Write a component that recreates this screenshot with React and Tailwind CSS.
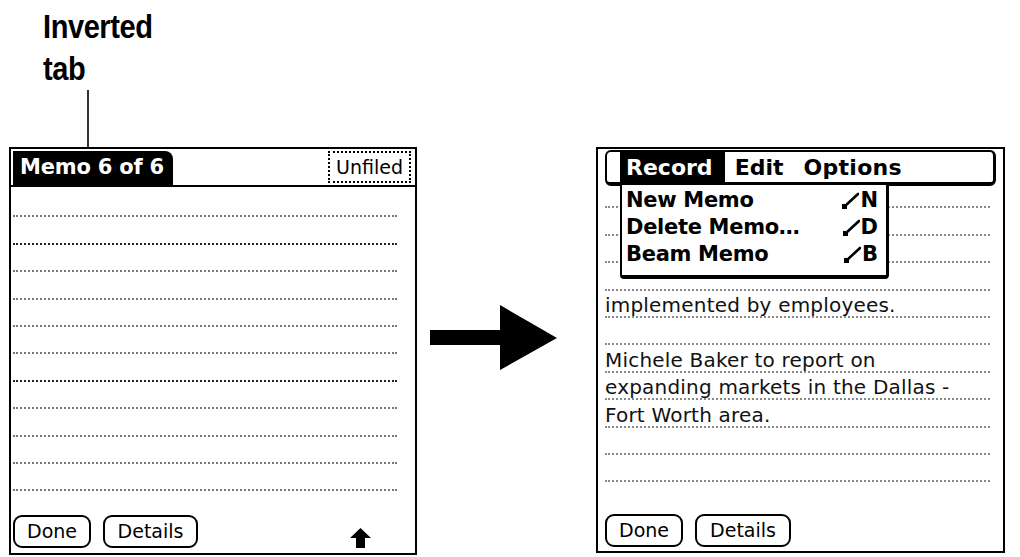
const PALM = { fontFamily: '"DejaVu Sans", "Noto Sans", sans-serif' };

const LEFT_LINES = [0, 1, 0, 0, 0, 0, 1, 0, 0, 0, 0];

const RIGHT_ROWS = [
  '', '', '', '',
  'implemented by employees.',
  '',
  'Michele Baker to report on',
  'expanding markets in the Dallas -',
  'Fort Worth area.',
  '', '',
];

const MENU_ITEMS = [
  { label: 'New Memo', key: 'N' },
  { label: 'Delete Memo…', key: 'D' },
  { label: 'Beam Memo', key: 'B' },
];

function Stroke() {
  return (
    <svg width="18" height="19" viewBox="0 0 18 19" className="mr-[1px]">
      <path d="M4 15 L17 3" stroke="black" strokeWidth="2.6" strokeLinecap="round" />
      <rect x="1" y="13" width="5" height="5" fill="black" />
    </svg>
  );
}

function PalmButton({ children, className = '' }) {
  return (
    <div
      className={`h-[33px] border-2 border-black rounded-[9px] flex items-center justify-center text-[19px] text-black ${className}`}
      style={PALM}
    >
      {children}
    </div>
  );
}

function LeftPanel() {
  return (
    <div className="w-[408px] h-[408px] border-2 border-black flex flex-col bg-white">
      {/* header with inverted tab */}
      <div className="flex items-end justify-between pt-[2px] pl-[2px] pr-[4px] border-b-2 border-black h-[38px]">
        <div
          className="bg-black text-white font-bold text-[21px] h-full pl-[7px] pr-[9px] flex items-center rounded-tr-[8px] tracking-[-0.2px]"
          style={PALM}
        >
          Memo 6 of 6
        </div>
        <div
          className="self-start h-[32px] border-2 border-dotted border-black px-[6px] flex items-center text-[19px]"
          style={PALM}
        >
          Unfiled
        </div>
      </div>

      {/* empty memo lines */}
      <div className="pl-[2px] pr-[18px] mt-[3px]">
        {LEFT_LINES.map((b, i) => (
          <div
            key={i}
            className={`h-[27.4px] border-b-2 border-dotted ${b ? 'border-[#222]' : 'border-[#777]'}`}
          />
        ))}
      </div>

      {/* footer */}
      <div className="mt-auto flex items-center gap-[12px] pl-[2px] pr-[44px] pb-[5px]">
        <PalmButton className="w-[78px]">Done</PalmButton>
        <PalmButton className="w-[95px]">Details</PalmButton>
        <svg width="21" height="20" viewBox="0 0 21 20" className="ml-auto mt-[12px]">
          <path d="M10.5 0 L21 10 L15 10 L15 20 L6 20 L6 10 L0 10 Z" fill="black" />
        </svg>
      </div>
    </div>
  );
}

function RightPanel() {
  return (
    <div className="relative w-[409px] h-[406px] border-2 border-black flex flex-col bg-white">
      {/* menu bar */}
      <div className="mx-[7px] mt-[1px] h-[36px] border-2 border-black border-b-[4px] border-r-[3px] rounded-[6px] flex items-center pl-[13px]">
        <div
          className="bg-black text-white font-bold text-[22px] h-full flex items-center pl-[6px] pr-[12px]"
          style={PALM}
        >
          Record
        </div>
        <span className="font-bold text-[22px] ml-[10px]" style={PALM}>Edit</span>
        <span className="font-bold text-[22px] ml-[20px] tracking-[0.3px]" style={PALM}>Options</span>
      </div>

      {/* memo text on lines */}
      <div className="pl-[7px] pr-[13px] mt-[-5px]">
        {RIGHT_ROWS.map((t, i) => (
          <div
            key={i}
            className="h-[27.4px] border-b-2 border-dotted border-[#888] flex items-end text-[20px] leading-none pb-[1px] text-[#111] tracking-[0.2px] whitespace-nowrap"
            style={PALM}
          >
            {t}
          </div>
        ))}
      </div>

      {/* footer */}
      <div className="mt-auto flex items-center gap-[12px] pl-[7px] pb-[4px]">
        <PalmButton className="w-[78px]">Done</PalmButton>
        <PalmButton className="w-[96px]">Details</PalmButton>
      </div>

      {/* open dropdown menu */}
      <div className="absolute left-[22px] top-[34px] w-[269px] h-[96px] bg-white border-2 border-black border-b-[4px] border-r-[3px] rounded-b-[4px] pl-[4px] pr-[8px] pt-[2px]">
        {MENU_ITEMS.map((m) => (
          <div key={m.key} className="h-[27px] flex items-center justify-between font-bold text-[21px]" style={PALM}>
            <span className="tracking-[-0.3px]">{m.label}</span>
            <span className="flex items-center">
              <Stroke />
              {m.key}
            </span>
          </div>
        ))}
      </div>
    </div>
  );
}

export default function App() {
  return (
    <div className="w-[1020px] h-[557px] bg-white flex items-start text-black">
      <div className="flex flex-col ml-[9px]">
        <div className="h-[147px] flex flex-col pl-[34px]">
          <div
            className="font-bold text-[33px] leading-[42px] mt-[6px] tracking-[-0.5px] scale-x-[0.88] origin-left"
            style={{ fontFamily: '"Liberation Sans Narrow", "Liberation Sans", sans-serif' }}
          >
            Inverted
            <br />
            tab
          </div>
          <div className="w-[2px] flex-1 bg-[#333] ml-[44px] mb-[-4px]" />
        </div>
        <LeftPanel />
      </div>

      <svg width="128" height="66" viewBox="0 0 128 66" className="mt-[305px] ml-[13px]">
        <rect x="0" y="25" width="72" height="15" fill="black" />
        <path d="M70 0 L127 33 L70 65 Z" fill="black" />
      </svg>

      <div className="mt-[147px] ml-[38px]">
        <RightPanel />
      </div>
    </div>
  );
}
